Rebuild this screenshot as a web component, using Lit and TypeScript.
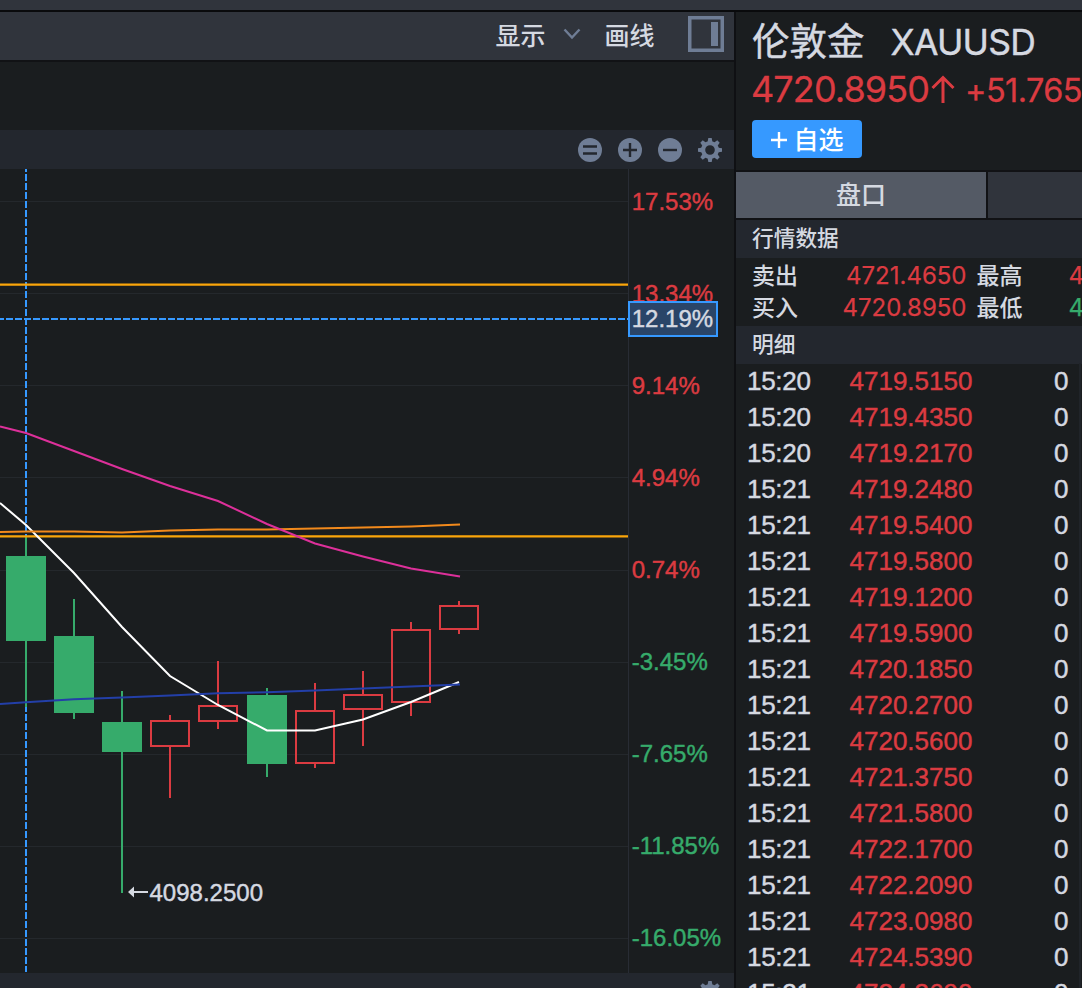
import { LitElement, html, svg, css } from "lit";
import { customElement } from "lit/decorators.js";

interface Candle { x: number; top: number; bottom: number; high: number; low: number; up: boolean; }

const CANDLES: Candle[] = [
  { x: 26, top: 556, bottom: 641, high: 537, low: 707, up: false },
  { x: 74, top: 636, bottom: 713, high: 599, low: 719, up: false },
  { x: 122, top: 722, bottom: 752, high: 691, low: 893, up: false },
  { x: 170, top: 720, bottom: 747, high: 715, low: 798, up: true },
  { x: 218, top: 705, bottom: 722, high: 661, low: 729, up: true },
  { x: 267, top: 695, bottom: 764, high: 688, low: 777, up: false },
  { x: 315, top: 710, bottom: 764, high: 683, low: 768, up: true },
  { x: 363, top: 694, bottom: 710, high: 671, low: 746, up: true },
  { x: 411, top: 629, bottom: 703, high: 622, low: 716, up: true },
  { x: 459, top: 605, bottom: 630, high: 601, low: 634, up: true },
];

const GRID = [201.5, 293.5, 385.5, 477.5, 570.5, 662.5, 754.5, 846.5, 938.5];
const LABELS = ["17.53%", "13.34%", "9.14%", "4.94%", "0.74%", "-3.45%", "-7.65%", "-11.85%", "-16.05%"];

const TICKS: [string, string][] = [
  ["15:20", "4719.5150"], ["15:20", "4719.4350"], ["15:20", "4719.2170"],
  ["15:21", "4719.2480"], ["15:21", "4719.5400"], ["15:21", "4719.5800"],
  ["15:21", "4719.1200"], ["15:21", "4719.5900"], ["15:21", "4720.1850"],
  ["15:21", "4720.2700"], ["15:21", "4720.5600"], ["15:21", "4721.3750"],
  ["15:21", "4721.5800"], ["15:21", "4722.1700"], ["15:21", "4722.2090"],
  ["15:21", "4723.0980"], ["15:21", "4724.5390"], ["15:21", "4724.3690"],
];

const gear = () => {
  const teeth = [0, 45, 90, 135, 180, 225, 270, 315];
  return html`<svg class="icon" width="24" height="24" viewBox="-12 -12 24 24">
    ${teeth.map((a) => svg`<path d="M-2.600 -7L-1.700 -12H1.700L2.600 -7Z" fill="#6f7d95" transform="rotate(${a})"></path>`)}
    <circle r="6.900" fill="none" stroke="#6f7d95" stroke-width="4.200"></circle>
  </svg>`;
};

@customElement("price-chart")
class PriceChart extends LitElement {
  static styles = css`
    :host { display: block; height: 804px; }
    svg { display: block; }
    text { font-family: "Liberation Sans", Arial, sans-serif; font-size: 24px; stroke-width: .45px; }
    .up { fill: #db3b41; stroke: #db3b41; }
    .down { fill: #36ab6b; stroke: #36ab6b; }
    .plain { fill: #d5d9e1; stroke: #d5d9e1; }
    .grid { stroke: #24282c; }
    .line { fill: none; stroke-width: 2; }
  `;

  private candle(c: Candle) {
    const color = c.up ? "#db3b41" : "#36ab6b";
    return svg`
      <rect x=${c.x - 1} y=${c.high} width="2" height=${c.top - c.high} fill=${color}></rect>
      <rect x=${c.x - 1} y=${c.bottom} width="2" height=${c.low - c.bottom} fill=${color}></rect>
      ${c.up
        ? svg`<rect x=${c.x - 19} y=${c.top + 1} width="38" height=${c.bottom - c.top - 2} fill="none" stroke=${color} stroke-width="2"></rect>`
        : svg`<rect x=${c.x - 20} y=${c.top} width="40" height=${c.bottom - c.top} fill=${color}></rect>`}`;
  }

  render() {
    return html`<svg width="734" height="804" viewBox="0 169 734 804">
      ${GRID.map((y) => svg`<path class="grid" d="M0 ${y}H628"></path>`)}
      <path stroke="#282c34" d="M628.5 169V973"></path>
      <path stroke="#3699ff" stroke-width="2" stroke-dasharray="7 2" d="M26 165V972"></path>
      <path stroke="#3699ff" stroke-width="2" stroke-dasharray="7 2" d="M-3 319H628"></path>
      ${CANDLES.map((c) => this.candle(c))}
      <path stroke="#faa50a" stroke-width="2.2" d="M0 284.6H628M0 536.3H628"></path>
      <polyline class="line" stroke="#ffffff" points="0,503 26,525 74,573 122,627 170,676 218,705 267,730.5 315,730.5 363,719.5 411,702 459,682"></polyline>
      <polyline class="line" stroke="#f28a1c" points="0,532 26,531.5 74,531.5 122,532.5 170,530.5 218,529.5 267,529.5 315,528.5 363,527.5 411,526.5 460,524.5"></polyline>
      <polyline class="line" stroke="#dd309a" points="0,426.5 26,433 74,451 122,469 170,486 218,501 267,524 315,543.5 363,556.5 411,568.5 460,576.5"></polyline>
      <polyline class="line" stroke="#233fa8" points="0,704 26,702.3 74,699.3 122,697.5 170,695.5 218,693.3 267,692.3 315,690.5 363,688.5 411,686.5 460,684.5"></polyline>
      ${LABELS.map((t, i) => svg`<text class=${i < 5 ? "up" : "down"} x="631.700" y=${210 + i * 92}>${t}</text>`)}
      <rect x="629" y="302" width="88" height="34" fill="#2a4568" stroke="#3699ff" stroke-width="2"></rect>
      <text class="plain" x="631.700" y="327">12.19%</text>
      <path fill="#d5d9e1" d="M128 892l6-5.5v4.500h14v2h-14v4.500z"></path>
      <text class="plain" x="149.5" y="901" textLength="113.500">4098.2500</text>
    </svg>`;
  }
}

@customElement("app-root")
class AppRoot extends LitElement {
  static styles = css`
    :host {
      display: flex; flex-direction: column; width: 1082px; height: 988px; overflow: hidden;
      background: #1a1d1f; color: #d5d9e1;
      font-family: Inter, "Noto Sans CJK SC", sans-serif;
    }
    * { box-sizing: border-box; }
    .strip { flex: none; height: 12px; background: #30343c; border-bottom: 2px solid #090a0c; }
    .body { flex: 1; min-height: 0; display: grid; grid-template-columns: 734px 1fr; }
    .left { overflow: hidden; min-height: 0; }
    .toolbar {
      height: 50px; background: #30343c; border-bottom: 2px solid #111215; display: flex; align-items: center;
      justify-content: flex-end; padding-right: 10px; font-size: 25px; font-weight: 500;
    }
    .toolbar span { padding-bottom: 5px; }
    .toolbar svg { display: block; }
    .chev { margin: -4px 23px 0 18px; }
    .panel { margin-left: 33.5px; margin-top: -4px; }
    .blank { height: 68px; }
    .head { height: 39px; background: #23272e; display: flex; justify-content: flex-end; align-items: center; gap: 16px; padding-right: 12px; }
    .foot { height: 39px; background: #23272e; display: flex; justify-content: flex-end; padding: 8px 12px 0 0; }
    .icon { display: block; }
    .right { border-left: 2px solid #0f1013; overflow: hidden; min-height: 0; white-space: nowrap; display: flex; flex-direction: column; }
    .info { height: 160px; flex: none; padding-left: 16px; border-bottom: 2px solid #111215; }
    .name { height: 58px; display: flex; align-items: center; font-size: 37.5px; gap: 26px; padding-bottom: 6px; -webkit-text-stroke: .4px; }
    .code { font-size: 35.5px; letter-spacing: -.8px; padding-top: 9px; }
    .price { height: 42px; margin-top: -2px; display: flex; align-items: flex-start; color: #db3b41; font-size: 36px; line-height: 42px; -webkit-text-stroke: .3px; }
    .last { width: 180px; flex: none; letter-spacing: -.9px; margin-left: -1px; }
    .arrow { width: 24px; height: 28px; flex: none; margin: 7px 10px 0 0; }
    .chg { font-size: 32.5px; letter-spacing: -.6px; padding-top: 2px; }
    .add {
      margin-top: 10px; width: 110px; height: 38px; background: #3699ff; border-radius: 4px; color: #fff;
      display: flex; align-items: center; justify-content: center; gap: 5px; font-size: 25px; font-weight: 500; line-height: 36px;
    }
    .add svg { margin-top: 2px; }
    .add span { padding-top: 1px; }
    .tabs { height: 48px; flex: none; display: grid; grid-template-columns: 250px 1fr; gap: 2px; background: #111215; border-bottom: 2px solid #111215; }
    .tab { background: #30343c; }
    .active { background: #545a65; font-size: 25px; font-weight: 500; display: flex; align-items: center; justify-content: center; padding-bottom: 4px; }
    .section { height: 38px; flex: none; background: #23272e; padding-left: 16px; line-height: 37px; font-size: 21.7px; font-weight: 500; }
    .quotes { height: 68px; flex: none; padding: 2px 0; display: grid; grid-template-columns: 84px 130.5px 10px 92px 1fr; grid-auto-rows: 32px; line-height: 33px; padding-left: 16px; font-size: 23px; }
    .quotes .k { font-weight: 500; }
    .quotes .k.mid { grid-column: 4; }
    .quotes .v { color: #db3b41; text-align: right; font-size: 24px; line-height: 32px; -webkit-text-stroke: .25px; }
    .quotes .v.edge { text-align: left; }
    .quotes .v.green { color: #36ab6b; }
    .ticks { border-right: 2px solid #202429; margin-right: 1px; margin-top: -1px; font-family: "Liberation Sans", Arial, sans-serif; font-size: 26px; -webkit-text-stroke: .45px; }
    .tick { height: 36px; line-height: 36px; display: grid; grid-template-columns: 102.500px 1fr 30px; padding: 0 10.5px 0 11px; }
    .tick .t { letter-spacing: -.3px; }
    .tick .p { color: #db3b41; }
    .tick .n { text-align: right; }
  `;

  render() {
    const disc = (d: string) => html`<svg class="icon" width="24" height="24" viewBox="0 0 24 24"><circle cx="12" cy="12" r="12" fill="#6f7d95"></circle><path stroke="#23272e" stroke-width="2.4" d=${d}></path></svg>`;
    return html`
      <div class="strip"></div>
      <div class="body">
        <div class="left">
          <div class="toolbar">
            <span>显示</span>
            <svg class="chev" width="18" height="12" viewBox="0 0 18 12"><path d="M1.500 1.500l7.500 8 7.500-8" fill="none" stroke="#6f7d95" stroke-width="2.4"></path></svg>
            <span>画线</span>
            <svg class="panel" width="36" height="36" viewBox="0 0 36 36"><rect x="1.75" y="1.75" width="32.5" height="32.5" fill="none" stroke="#6f7d95" stroke-width="3.5"></rect><rect x="23" y="6" width="7" height="24" fill="#6f7d95"></rect></svg>
          </div>
          <div class="blank"></div>
          <div class="head">${disc("M5 8.5H19M5 15.5H19")}${disc("M5 12H19M12 5V19")}${disc("M5 12H19")}${gear()}</div>
          <price-chart></price-chart>
          <div class="foot">${gear()}</div>
        </div>
        <div class="right">
          <div class="info">
            <div class="name"><span>伦敦金</span><span class="code">XAUUSD</span></div>
            <div class="price">
              <span class="last">4720.8950</span>
              <svg class="arrow" viewBox="0 0 24 28"><path d="M12 28V3M1.500 13L12 2.500L22.500 13" fill="none" stroke="#db3b41" stroke-width="3"></path></svg>
              <span class="chg">+51.765</span>
            </div>
            <div class="add"><svg width="18" height="18" viewBox="0 0 18 18"><path d="M1 9H17M9 1V17" stroke="#fff" stroke-width="2.400"></path></svg><span>自选</span></div>
          </div>
          <div class="tabs"><div class="tab active">盘口</div><div class="tab"></div></div>
          <div class="section">行情数据</div>
          <div class="quotes">
            <span class="k">卖出</span><span class="v">4721.4650</span><span class="k mid">最高</span><span class="v edge">4</span>
            <span class="k">买入</span><span class="v">4720.8950</span><span class="k mid">最低</span><span class="v edge green">4</span>
          </div>
          <div class="section">明细</div>
          <div class="ticks">
            ${TICKS.map(([t, p]) => html`<div class="tick"><span class="t">${t}</span><span class="p">${p}</span><span class="n">0</span></div>`)}
          </div>
        </div>
      </div>`;
  }
}
